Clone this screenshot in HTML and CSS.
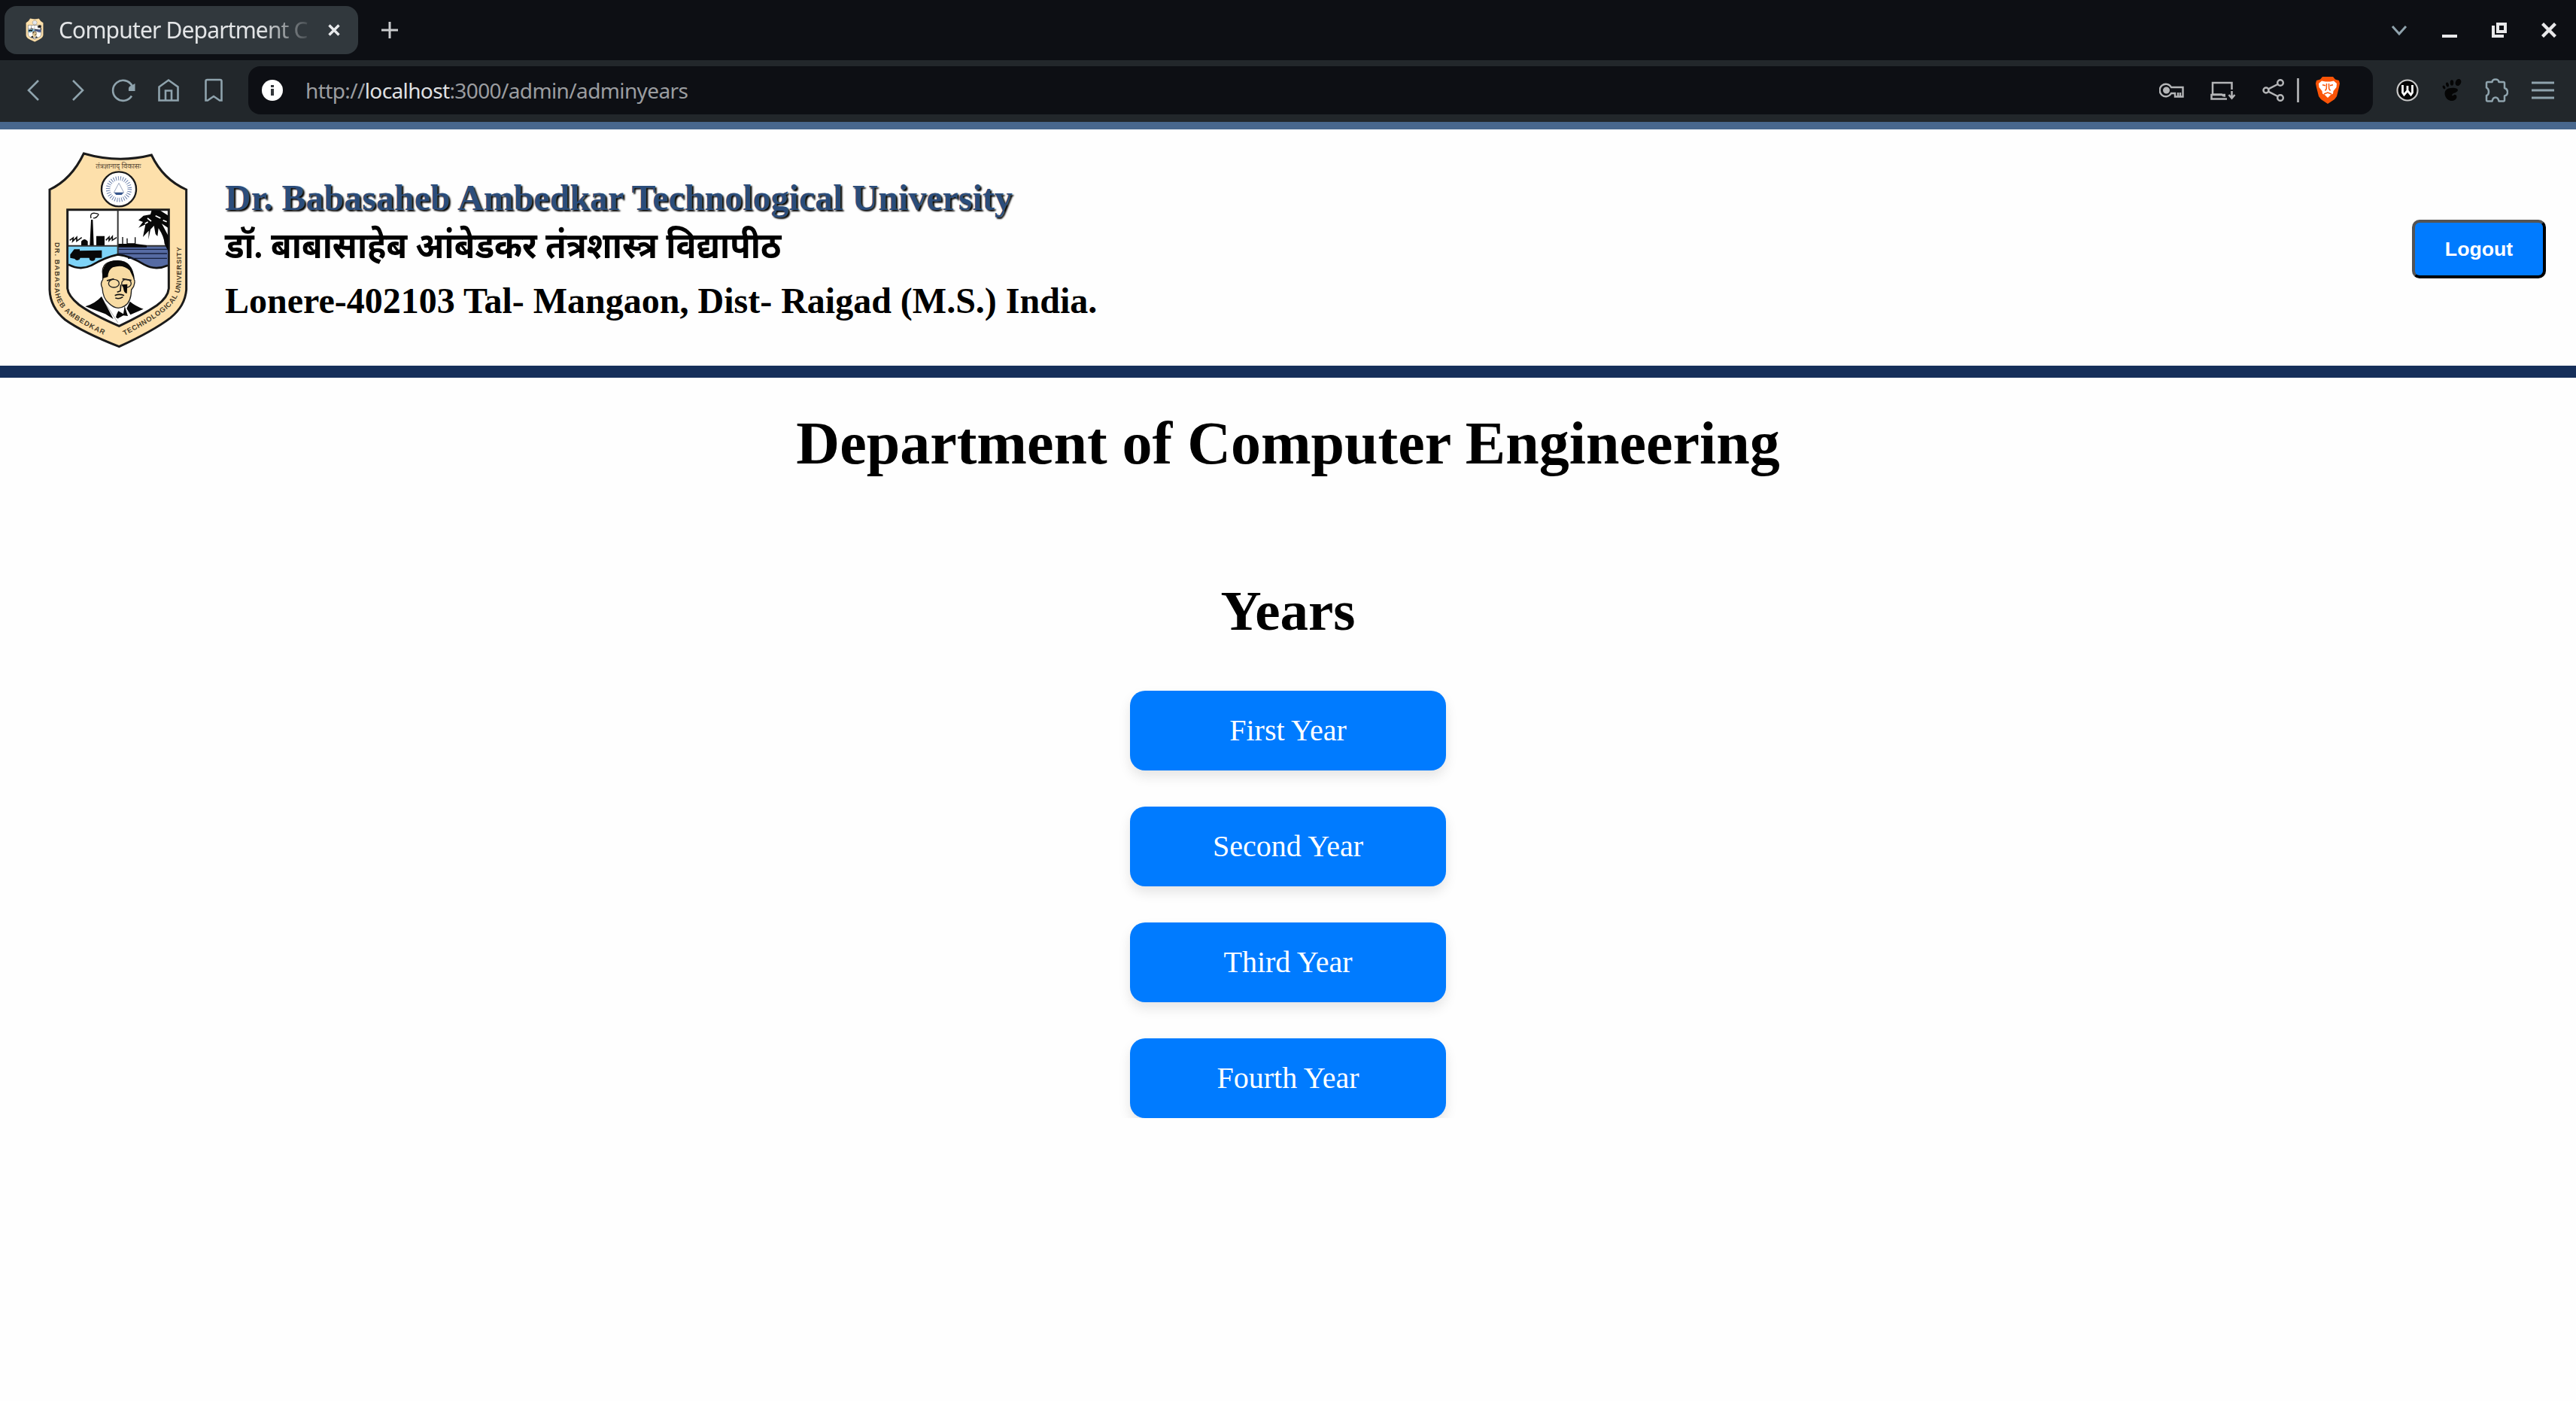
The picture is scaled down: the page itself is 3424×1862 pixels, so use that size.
FILE: index.html
```html
<!DOCTYPE html>
<html lang="en">
<head>
<meta charset="utf-8">
<title>Computer Department</title>
<link rel="stylesheet" href="styles.css">
</head>
<body>
<div class="tabstrip">
  <div class="tab">
    <svg class="favicon" viewBox="70 35 560 785" preserveAspectRatio="none"><use href="#crest"/></svg>
    <span class="tab-title">Computer Department C</span>
    <svg class="tab-close" viewBox="0 0 16 16"><path d="M1.5 1.5 14.5 14.5M14.5 1.5 1.5 14.5" stroke="#e8eaec" stroke-width="3.4"/></svg>
  </div>
  <svg class="tab-new" viewBox="0 0 22 22"><path d="M11 0V22M0 11H22" stroke="#c9cbcd" stroke-width="3"/></svg>
  <div class="window-controls">
    <svg width="22" height="16" viewBox="0 0 22 16"><path d="M2 3 11 13 20 3" fill="none" stroke="#8fa3ad" stroke-width="3"/></svg>
    <svg width="20" height="20" viewBox="0 0 20 20"><path d="M0 18H20" stroke="#e8e8ea" stroke-width="4"/></svg>
    <svg width="20" height="20" viewBox="0 0 20 20"><path d="M8 2H18V12H8ZM2 4V18H16" fill="none" stroke="#e8e8ea" stroke-width="4"/></svg>
    <svg width="20" height="20" viewBox="0 0 20 20"><path d="M1.5 1.5 18.5 18.5M18.5 1.5 1.5 18.5" stroke="#e8e8ea" stroke-width="4.4"/></svg>
  </div>
</div>
<div class="toolbar">
  <div class="nav">
    <svg width="32" height="32" viewBox="0 0 32 32"><path d="M23 3 10 16 23 29"/></svg>
    <svg width="32" height="32" viewBox="0 0 32 32"><path d="M9 3 22 16 9 29"/></svg>
    <svg width="32" height="32" viewBox="0 0 32 32"><path d="M27.5 10A13.5 13.5 0 1 0 27 23.5"/><path d="M31.5 7V17H23Q22 11 26 10Z" fill="#8fa3ad" stroke="none"/></svg>
    <svg width="32" height="32" viewBox="0 0 32 32"><path d="M3.500 11.500 16 2.500 28.500 11.500V29.500H3.500ZM12 29V16.500H20V29"/></svg>
    <svg width="32" height="32" viewBox="0 0 32 32"><path d="M5.500 4Q5.500 2 7.500 2H24.500Q26.500 2 26.500 4V29.500H24L16 24 8 29.500H5.500Z"/></svg>
  </div>
  <div class="address">
    <svg width="28" height="28" viewBox="0 0 28 28"><circle cx="14" cy="14" r="14" fill="#fff"/><path d="M12 7h4v3h-4zM12 12h4v9h-4z" fill="#33363a"/></svg>
    <span class="url">http://<b>localhost</b>:3000/admin/adminyears</span>
    <svg class="key" width="33" height="20" viewBox="0 0 33 20" fill="none" stroke="#b4b5b7" stroke-width="2.400"><path d="M16 6A8.200 8.200 0 1 0 16 14H21V18.500H31.500V6Z M25 18V13M28 18V13"/><circle cx="9.500" cy="10" r="3.300" fill="#b4b5b7"/></svg>
    <svg class="device" width="34" height="25" viewBox="0 0 34 25" fill="none" stroke="#b4b5b7" stroke-width="2.500"><path d="M28.500 11V2H3V17.500M20 18H1.500V23.500H22M3 17.500H15Q17 20 20 19.500"/><path d="M28.500 13V22M24.500 18 28.500 22.500 32.500 18"/></svg>
    <svg class="share" width="30" height="30" viewBox="0 0 30 30" fill="none" stroke="#b4b5b7" stroke-width="2.500"><circle cx="5" cy="15" r="3.500"/><circle cx="24" cy="5" r="3.800"/><circle cx="24" cy="25" r="3.800"/><path d="M8.500 13.200 20.500 7M8.500 16.800 20.500 23"/></svg>
    <span class="divider"></span>
    <svg class="brave" width="32" height="36" viewBox="0 0 32 36"><path d="M9 0H23L26 3.500 31 5 32 9 31 14 28 26 25 30 16 36 7 30 4 26 1 14 0 9 1 5 6 3.500Z" fill="#fb5407"/><path d="M4 9 8 5.500 13 6.500H19L24 5.500 28 9 27.500 14 23.500 19 23 22.500 20 24 16 28 12 24 9 22.500 8.500 19 4.500 14Z" fill="#fff"/><path d="M9 10.800 13 11.800M23 10.800 19 11.800M14.500 9 14.300 16 12.500 18.500M17.500 9 17.700 16 19.500 18.500M11 23 16 21 21 23" fill="none" stroke="#fb5407" stroke-width="1.500"/></svg>
  </div>
  <div class="extensions">
    <svg width="30" height="30" viewBox="0 0 30 30"><circle cx="15" cy="15" r="13.500" fill="#050505" stroke="#c8c8c8" stroke-width="2.200"/><path d="M8.500 8V18L10.500 21 15 15.500 19.500 21 21.500 18V8M15 9V16" fill="none" stroke="#fff" stroke-width="2.800"/></svg>
    <svg width="26" height="30" viewBox="0 0 26 30" fill="#050505"><path d="M17 12C7 11 2 15 4 22 6 29 14 31 18 27 21 24 19 20 16 21 13 24 12 21 15 19 22 17 23 13 17 12Z"/><ellipse cx="21.500" cy="4.500" rx="3.600" ry="4.800" transform="rotate(25 21.500 4.500)"/><ellipse cx="13" cy="5" rx="2.300" ry="3.700"/><ellipse cx="7" cy="7.500" rx="1.900" ry="3" transform="rotate(-15 7 7.500)"/><ellipse cx="2.500" cy="11" rx="1.600" ry="2.600" transform="rotate(-25 2.500 11)"/></svg>
    <svg width="32" height="32" viewBox="0 0 32 32" fill="none" stroke="#8fa3ad" stroke-width="2.500" stroke-linejoin="round"><path d="M3 6.500Q3 5 4.500 5H10.500Q11 1.500 15 1.500T19.500 5H25.500Q27 5 27 6.500V13Q31 14.500 31 18.500T27 23.500V29Q27 30.500 25.500 30.500H19.500Q18.500 25.500 15 25.500T10.500 30.500H4.500Q3 30.500 3 29V23Q6 22 6 18T3 12.500Z"/></svg>
    <svg width="30" height="24" viewBox="0 0 30 24"><path d="M0 2H30M0 12H30M0 22H30" stroke="#8fa3ad" stroke-width="3"/></svg>
  </div>
</div>

<header class="site-header">
  <svg class="logo" viewBox="0 0 690 870">
    <defs>
      <path id="arc-left" d="M98 396V585Q102 650 162 692 Q235 742 350 790"/>
      <path id="arc-right" d="M376 768Q500 705 558 652 Q600 608 602 560V370"/>
    </defs>
    <g id="crest">
      <path d="M214 42Q350 82 484 48Q530 145 623 186V585Q618 650 560 697Q490 750 355 812Q210 755 140 705Q80 655 78 585V186Q165 145 214 42Z" fill="#fde0ab" stroke="#1b1b1b" stroke-width="9"/>
      <path d="M149 266H553V580Q550 615 505 648Q450 685 355 730Q250 685 195 645Q152 610 149 580Z" fill="#fff" stroke="#1b1b1b" stroke-width="9"/>
      <path d="M153 410H350V445Q290 460 245 488Q200 510 153 485Z" fill="#7ed3f7"/>
      <path d="M350 410H549V488Q500 505 455 485Q400 450 350 445Z" fill="#566ba3"/>
      <path d="M350 268V445M153 410H549" stroke="#333" stroke-width="6"/>
      <path d="M153 485Q200 510 245 488Q300 455 350 445Q400 450 455 485Q500 510 549 488" fill="none" stroke="#111" stroke-width="8"/>
      <path d="M352 424H546M352 441H546M390 460H546" stroke="#17213f" stroke-width="4"/>
      <path d="M243 306H250L254 408H238ZM264 371H297V408H264ZM204 408V392Q217 376 230 392V408ZM160 445 176 424H198V430L286 428V458H260A12 12 0 0 1 236 458H200A12 12 0 0 1 178 462L160 458Z" fill="#080808"/>
      <path d="M158 388 172 378 170 392 186 376 186 391 206 377M302 388 315 375 315 389 328 373 328 388 345 377" fill="none" stroke="#111" stroke-width="5"/>
      <path d="M243 300Q237 278 258 280T270 290Q262 302 252 299" fill="none" stroke="#111" stroke-width="4"/>
      <path d="M352 410V402H367V375H371V402H385V380H389V400H417V376H421V402L465 408V416H352Z" fill="#080808"/>
      <path d="M552 290 520 270 485 268 480 285 452 290 432 308 450 315 432 338 460 325 450 375 473 350 472 385 480 345 494 330 500 363 508 372 512 340Q535 375 536 402L552 435V372L525 322 552 340Z" fill="#080808"/>
      <path d="M468 300 483 312M500 290 520 300M530 308 545 314M458 322 470 315" stroke="#fff" stroke-width="5"/>
      <path d="M290 525Q280 470 350 470Q408 470 415 545Q420 550 413 572L404 585Q403 635 377 650Q345 670 315 640Q290 620 288 578Q278 560 290 545Z" fill="#f8dca4" stroke="#222" stroke-width="4"/>
      <path d="M290 540Q280 468 350 469Q410 472 415 545L397 508Q370 482 330 496Q312 505 310 534Z" fill="#080808"/>
      <path d="M306 549 334 542M368 542 404 548M338 608Q355 600 375 608M340 618Q355 624 370 614M362 565 360 590 347 595" stroke="#111" stroke-width="5" fill="none"/>
      <ellipse cx="334" cy="560" rx="21" ry="16" fill="none" stroke="#222" stroke-width="4"/>
      <ellipse cx="384" cy="560" rx="19" ry="16" fill="none" stroke="#222" stroke-width="4"/>
      <path d="M368 565 388 563 386 600Q374 600 372 580Z" fill="#080808"/>
      <path d="M285 612 332 702 300 682 220 652Q260 640 285 612ZM398 632Q420 650 452 662L400 685 385 660ZM345 684 352 670 372 682 377 650 390 690 372 688 350 700 358 706 342 695Z" fill="#080808"/>
      <path d="M300 640 350 716" stroke="#777" stroke-width="2"/>
      <circle cx="354" cy="184" r="69" fill="#fff" stroke="#1b1b1b" stroke-width="7"/>
      <circle cx="354" cy="184" r="43" fill="none" stroke="#6e83ad" stroke-width="17" stroke-dasharray="3 6"/>
      <path d="M354 160 374 198H334Z" fill="none" stroke="#9aa5bd" stroke-width="3"/>
      <path d="M335 198H373L365 207H343Z" fill="#35558b"/>
    </g>
    <text class="motto" x="262" y="101" textLength="180" lengthAdjust="spacingAndGlyphs">तंत्रज्ञानाद् विकासः</text>
    <text class="rim rim-left"><textPath href="#arc-left">DR. BABASAHEB  AMBEDKAR</textPath></text>
    <text class="rim rim-right"><textPath href="#arc-right">TECHNOLOGICAL UNIVERSITY</textPath></text>
  </svg>
  <div class="names">
    <div class="name-en">Dr. Babasaheb Ambedkar Technological University</div>
    <div class="name-mr"><span>डॉ. बाबासाहेब आंबेडकर तंत्रशास्त्र विद्यापीठ</span></div>
    <div class="place">Lonere-402103 Tal- Mangaon, Dist- Raigad (M.S.) India.</div>
  </div>
  <button class="logout">Logout</button>
</header>

<main>
  <h1>Department of Computer Engineering</h1>
  <h2>Years</h2>
  <nav class="years">
    <a>First Year</a>
    <a>Second Year</a>
    <a>Third Year</a>
    <a>Fourth Year</a>
  </nav>
</main>
</body>
</html>
```
FILE: styles.css
```css
* { box-sizing: border-box; }
body {
  margin: 0;
  background: #fefefe;
  color: #000;
  font-family: "Liberation Serif", "Noto Sans Devanagari", serif;
}
svg { display: block; flex: none; }

/* browser window */
.tabstrip {
  display: flex;
  align-items: center;
  height: 80px;
  padding: 0 26px 0 6px;
  background: #0d0f14;
}
.tab {
  display: flex;
  align-items: center;
  width: 470px;
  height: 64px;
  padding: 0 24px 0 28px;
  border-radius: 16px;
  background: #31383d;
}
.favicon { width: 24px; height: 32px; }
.tab-title {
  width: 344px;
  margin-left: 20px;
  white-space: nowrap;
  font: 30px/40px "Noto Sans", sans-serif;
  letter-spacing: -.85px;
  color: #e3e5e7;
  -webkit-mask-image: linear-gradient(to right, #000 270px, transparent 340px);
  mask-image: linear-gradient(to right, #000 270px, transparent 340px);
}
.tab-close { width: 16px; height: 16px; margin-left: auto; }
.tab-new { width: 22px; height: 22px; margin-left: 31px; }
.window-controls { display: flex; align-items: center; gap: 46px; margin-left: auto; }

.toolbar {
  display: flex;
  align-items: center;
  height: 82px;
  padding: 0 29px 2px 28px;
  background: #22272b;
}
.nav { display: flex; gap: 28px; }
.nav svg { fill: none; stroke: #8fa3ad; stroke-width: 2.6; }
.address {
  display: flex;
  align-items: center;
  width: 2824px;
  height: 64px;
  margin-left: 30px;
  padding: 0 44px 0 18px;
  border-radius: 16px;
  background: #0d0f14;
}
.url {
  margin-left: 30px;
  font: 28px/40px "Noto Sans", sans-serif;
  letter-spacing: -.62px;
  color: #9b9da0;
}
.url b { font-weight: 400; color: #e0e1e3; }
.key { margin-left: auto; }
.device { margin-left: 35px; }
.share { margin-left: 35px; }
.divider { width: 3px; height: 32px; margin-left: 16px; background: #a6a7aa; }
.brave { margin-left: 22px; }
.extensions { display: flex; align-items: center; justify-content: space-between; width: 210px; margin-left: auto; }

/* university header */
.site-header {
  display: flex;
  align-items: center;
  height: 340px;
  padding: 0 40px;
  border-top: 10px solid #48678d;
  border-bottom: 16px solid #162f5a;
}
.logo { width: 230px; height: 290px; margin-top: 12px; }
.motto { font: 26px "Noto Sans Devanagari", sans-serif; fill: #5a4a35; }
.rim { font: bold 28px "Liberation Sans", sans-serif; fill: #4b3f2c; }
.rim-left { letter-spacing: 3px; }
.rim-right { letter-spacing: 2px; }
.names { margin: 5px 0 0 29px; font-size: 48px; font-weight: 700; white-space: nowrap; }
.name-en { line-height: 56px; color: #2b4d7b; text-shadow: 2px 2px 2px #000; }
.name-mr { height: 81px; line-height: 71px; }
.name-mr span { display: inline-block; transform: scaleX(.933); transform-origin: left; }
.place { line-height: 56px; }
.logout {
  width: 178px;
  height: 78px;
  margin: 4px 0 0 auto;
  padding: 0;
  border: 4px outset #000;
  border-radius: 10px;
  background: #007bff;
  color: #fff;
  font: bold 26.667px "Liberation Sans", Arial, sans-serif;
}

/* page content */
main { display: flex; flex-direction: column; align-items: center; }
h1 { margin: 41px 0 0; font-size: 80px; line-height: 92px; }
h2 { margin: 133px 0 0; font-size: 75px; line-height: 88px; }
.years { display: flex; flex-direction: column; gap: 48px; margin-top: 62px; }
.years a {
  width: 420px;
  height: 106px;
  border-radius: 20px;
  background: #007bff;
  box-shadow: 0 8px 16px rgba(0, 0, 0, .1);
  color: #fff;
  font-size: 40px;
  line-height: 105px;
  text-align: center;
}
```
